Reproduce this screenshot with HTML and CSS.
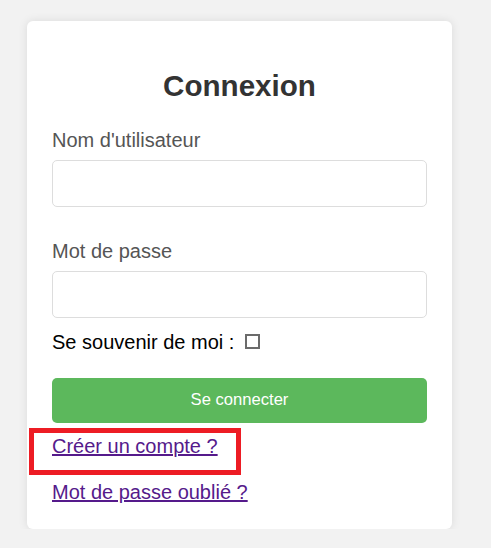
FILE: index.html
```html
<!DOCTYPE html>
<html lang="fr">
<head>
<meta charset="utf-8">
<title>Connexion</title>
<link rel="stylesheet" href="styles.css">
</head>
<body>
<div class="card">
  <h2 class="title">Connexion</h2>
  <form class="form">
    <label class="label" for="user">Nom d'utilisateur</label>
    <input class="field field-first" id="user" type="text">
    <label class="label" for="pass">Mot de passe</label>
    <input class="field" id="pass" type="password">
    <div class="remember">
      <span class="remember-text">Se souvenir de moi :</span>
      <span class="box"></span>
    </div>
    <button class="submit" type="button">Se connecter</button>
  </form>
  <div class="links">
    <div class="link-row">
      <a class="link" href="#">Créer un compte ?</a>
      <div class="highlight"></div>
    </div>
    <div class="link-row">
      <a class="link" href="#">Mot de passe oublié ?</a>
    </div>
  </div>
</div>
</body>
</html>
```

FILE: styles.css
```css
html, body {
  margin: 0;
  padding: 0;
}
body {
  background: #f2f2f2;
  font-family: "Liberation Sans", Arial, sans-serif;
  padding-top: 21px;
  padding-left: 27px;
}
.card {
  box-sizing: border-box;
  width: 425px;
  background: #fff;
  border-radius: 6px;
  box-shadow: 0 0 10px rgba(0, 0, 0, 0.1);
  padding: 25px;
}
.title {
  margin: 23px 0 25px;
  font-size: 29.6px;
  font-weight: bold;
  color: #333;
  text-align: center;
  line-height: 34.5px;
}
.form {
  display: flex;
  flex-direction: column;
}
.label {
  display: block;
  font-size: 20px;
  line-height: 23px;
  color: #555;
  margin-bottom: 8px;
}
.field {
  box-sizing: border-box;
  width: 100%;
  height: 47px;
  border: 1px solid #ddd;
  border-radius: 5px;
  background: #fff;
  margin: 0;
  padding: 0 10px;
  font-size: 16px;
  font-family: inherit;
}
.field-first {
  margin-bottom: 33px;
}
.remember {
  display: flex;
  align-items: center;
  margin-top: 13px;
  font-size: 20px;
  line-height: 23px;
  color: #000;
}
.box {
  box-sizing: border-box;
  width: 15px;
  height: 15px;
  border: 2px solid #6b6b6b;
  margin-left: 11px;
  margin-top: -1px;
}
.submit {
  margin-top: 24px;
  height: 45px;
  border: none;
  border-radius: 5px;
  background: #5cb85c;
  color: #fff;
  font-family: inherit;
  font-size: 16.6px;
  cursor: pointer;
}
.links {
  margin-top: 12px;
  display: flex;
  flex-direction: column;
  gap: 23px;
}
.link-row {
  position: relative;
  font-size: 20px;
  line-height: 23px;
}
.link {
  color: #551a8b;
  text-decoration: underline;
}
.highlight {
  position: absolute;
  left: -23px;
  top: -7px;
  width: 212px;
  height: 47px;
  box-sizing: border-box;
  border: 5px solid #ed1c24;
  pointer-events: none;
}
```
